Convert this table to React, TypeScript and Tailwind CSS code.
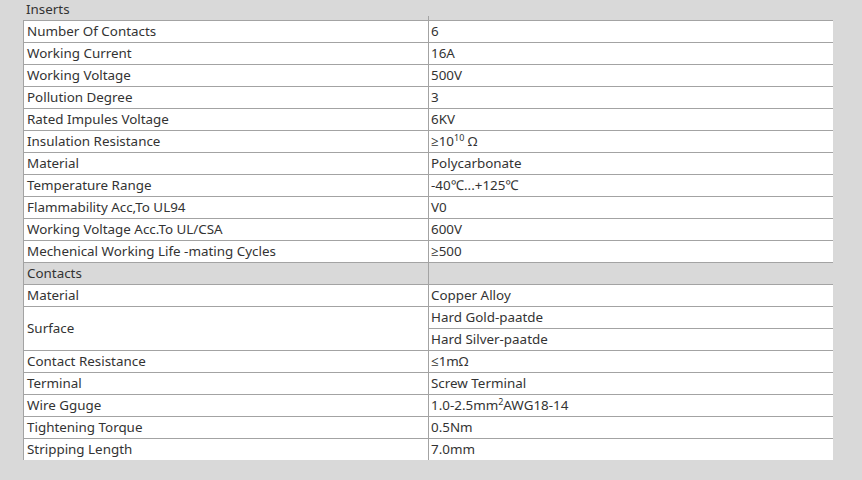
import React from "react";

type Row = { k: string; v: React.ReactNode };

const sup = "text-[9px] top-[-0.55em]";

const inserts: Row[] = [
  { k: "Number Of Contacts", v: "6" },
  { k: "Working Current", v: "16A" },
  { k: "Working Voltage", v: "500V" },
  { k: "Pollution Degree", v: "3" },
  { k: "Rated Impules Voltage", v: "6KV" },
  {
    k: "Insulation Resistance",
    v: (
      <>
        ≥10<sup className={sup}>10</sup> Ω
      </>
    ),
  },
  { k: "Material", v: "Polycarbonate" },
  { k: "Temperature Range", v: "-40℃...+125℃" },
  { k: "Flammability Acc,To UL94", v: "V0" },
  { k: "Working Voltage Acc.To UL/CSA", v: "600V" },
  { k: "Mechenical Working Life -mating Cycles", v: "≥500" },
];

const contactsAfter: Row[] = [
  { k: "Contact Resistance", v: "≤1mΩ" },
  { k: "Terminal", v: "Screw Terminal" },
  {
    k: "Wire Gguge",
    v: (
      <>
        1.0-2.5mm<sup className={sup}>2</sup>AWG18-14
      </>
    ),
  },
  { k: "Tightening Torque", v: "0.5Nm" },
  { k: "Stripping Length", v: "7.0mm" },
];

const L = "border-t border-l border-[#a3a3a3] bg-white h-[22px] pl-[3px] leading-[20px]";
const R = "border-t border-l border-[#a3a3a3] bg-white h-[22px] pl-[2px] leading-[20px]";

function DataRow({ r }: { r: Row }) {
  return (
    <>
      <div className={L}>{r.k}</div>
      <div className={R}>{r.v}</div>
    </>
  );
}

export default function App() {
  return (
    <div
      className="w-[862px] h-[480px] bg-[#d9d9d9] text-[#333333] text-[13.4px] overflow-hidden"
      style={{ fontFamily: '"Noto Sans", "Open Sans", sans-serif' }}
    >
      <div className="ml-[23px] w-[810px] grid grid-cols-[405px_405px]">
        <div className="h-[20px] pl-[3px] leading-[18px]">Inserts</div>
        <div className="h-[20px] flex flex-col justify-end">
          <div className="h-[4px] border-l border-[#a3a3a3]" />
        </div>
        {inserts.map((r) => (
          <DataRow key={r.k} r={r} />
        ))}
        <div className="border-t border-l border-[#a3a3a3] h-[22px] pl-[3px] leading-[20px]">Contacts</div>
        <div className="border-t border-l border-[#a3a3a3] h-[22px]" />
        <DataRow r={{ k: "Material", v: "Copper Alloy" }} />
        <div className="row-span-2 border-t border-l border-[#a3a3a3] bg-white h-[44px] pl-[3px] flex items-center">
          Surface
        </div>
        <div className={R}>Hard Gold-paatde</div>
        <div className={R}>Hard Silver-paatde</div>
        {contactsAfter.map((r) => (
          <DataRow key={r.k} r={r} />
        ))}
      </div>
    </div>
  );
}
